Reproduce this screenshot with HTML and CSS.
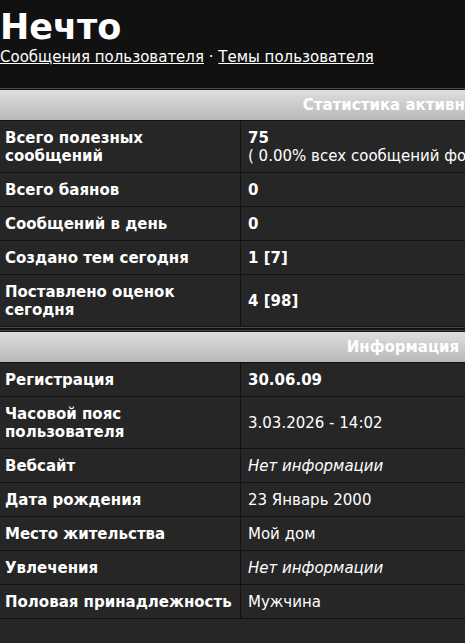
FILE: index.html
```html
<!DOCTYPE html>
<html lang="ru">
<head>
<meta charset="utf-8">
<title>Нечто</title>
<link rel="stylesheet" href="styles.css">
</head>
<body>
<div class="page">
  <header class="top">
    <h1 class="name">Нечто</h1>
    <nav class="links"><a href="#">Сообщения пользователя</a> · <a href="#">Темы пользователя</a></nav>
  </header>
  <main class="content">
    <section class="box">
      <div class="head">Статистика активности</div>
      <div class="grid">
        <div class="label"><span>Всего полезных сообщений</span></div><div class="value"><span><b>75</b><br>( 0.00% всех сообщений форума )</span></div>
        <div class="label"><span>Всего баянов</span></div><div class="value"><span><b>0</b></span></div>
        <div class="label"><span>Сообщений в день</span></div><div class="value"><span><b>0</b></span></div>
        <div class="label"><span>Создано тем сегодня</span></div><div class="value"><span><b>1 [7]</b></span></div>
        <div class="label"><span>Поставлено оценок сегодня</span></div><div class="value"><span><b>4 [98]</b></span></div>
      </div>
    </section>
    <section class="box last">
      <div class="head">Информация</div>
      <div class="grid">
        <div class="label"><span>Регистрация</span></div><div class="value"><span><b>30.06.09</b></span></div>
        <div class="label"><span>Часовой пояс пользователя</span></div><div class="value"><span>3.03.2026 - 14:02</span></div>
        <div class="label"><span>Вебсайт</span></div><div class="value"><span><i>Нет информации</i></span></div>
        <div class="label"><span>Дата рождения</span></div><div class="value"><span>23 Январь 2000</span></div>
        <div class="label"><span>Место жительства</span></div><div class="value"><span>Мой дом</span></div>
        <div class="label"><span>Увлечения</span></div><div class="value"><span><i>Нет информации</i></span></div>
        <div class="label"><span>Половая принадлежность</span></div><div class="value"><span>Мужчина</span></div>
      </div>
    </section>
  </main>
</div>
</body>
</html>
```
FILE: styles.css
```css
html, body {
  margin: 0;
  padding: 0;
  background: #262626;
  overflow-x: hidden;
}
body {
  font-family: "DejaVu Sans", Verdana, sans-serif;
  font-size: 15px;
  color: #fff;
}
.page {
  width: 806px;
  min-height: 643px;
  background: #262626;
}
.top {
  background: #111;
  height: 88px;
  box-sizing: border-box;
  padding-top: 7px;
}
.name {
  margin: 0;
  font-size: 35px;
  line-height: 40px;
  font-weight: bold;
  color: #fff;
}
.links {
  font-size: 15px;
  line-height: 18px;
  margin-top: 1px;
}
.links a {
  color: #fff;
}
.content {
  background: #111;
}
.box {
  border-top: 1px solid #4a4a4a;
  border-bottom: 1px solid #4a4a4a;
  padding-top: 1px;
  margin-bottom: 2px;
  background: #111;
}
.box.last {
  border-bottom: 0;
  margin-bottom: 0;
}
.head {
  height: 30px;
  line-height: 30px;
  background: linear-gradient(#dedede, #b9b9b9);
  color: #fff;
  font-weight: bold;
  font-size: 15px;
  text-align: center;
  border-bottom: 1px solid #111;
}
.grid {
  display: grid;
  grid-template-columns: 241px 1fr;
  background: #262626;
}
.label,
.value {
  display: flex;
  align-items: center;
  box-sizing: border-box;
  min-height: 34px;
  padding: 8px 5px 7px;
  line-height: 18px;
  border-bottom: 1px solid #111;
}
.label {
  font-weight: bold;
  border-right: 1px solid #111;
}
.value {
  padding-left: 7px;
}
```
